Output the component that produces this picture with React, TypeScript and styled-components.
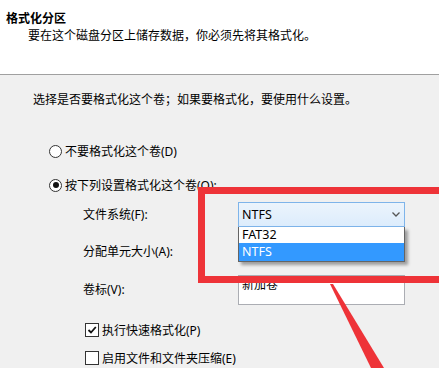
import React from 'react';
import styled, { createGlobalStyle } from 'styled-components';

// 全局样式
const GlobalStyle = createGlobalStyle`
  html, body {
    margin: 0;
    padding: 0;
    background: #f0f0f0;
  }
  body {
    font-family: "Noto Sans", "Noto Sans CJK SC", sans-serif;
    font-size: 12px;
    color: #000;
  }
`;

const Page = styled.div`
  position: relative;
  width: 439px;
  height: 368px;
  overflow: hidden;
  background: #f0f0f0;
`;

// 顶部白色标题区
const Header = styled.div`
  height: 75px;
  box-sizing: border-box;
  padding: 10px 0 0 6px;
  background: #fff;
  border-bottom: 1px solid #a0a0a0;
`;

const Title = styled.div`
  font-weight: bold;
  line-height: 17px;
`;

const Subtitle = styled.div`
  margin-left: 22px;
  line-height: 17px;
`;

const Body = styled.div`
  padding: 17px 0 0 33px;
`;

const Instruction = styled.div`
  line-height: 16px;
`;

const RadioGroup = styled.div`
  margin: 33px 0 0 16px;
  display: flex;
  flex-direction: column;
  gap: 14px;
`;

const OptionRow = styled.label`
  display: flex;
  align-items: center;
  height: 20px;
  gap: 3px;
`;

const RadioDot = styled.span<{ $checked?: boolean }>`
  width: 11px;
  height: 11px;
  border: 1px solid #333;
  border-radius: 50%;
  background: #fff;
  display: flex;
  align-items: center;
  justify-content: center;
  &::after {
    content: '';
    width: 6px;
    height: 6px;
    border-radius: 50%;
    background: ${(p) => (p.$checked ? '#111' : 'transparent')};
  }
`;

const FormGrid = styled.div`
  margin: 7px 0 0 50px;
  display: grid;
  grid-template-columns: 155px 167px;
  grid-template-rows: 25px 20px 30px;
  row-gap: 15px;
  align-items: center;
  & > :nth-child(n + 5) {
    margin-top: -5px;
  }
`;

const FieldLabel = styled.div`
  line-height: 16px;
`;

const SelectWrap = styled.div`
  position: relative;
  height: 25px;
`;

const SelectBox = styled.div`
  height: 25px;
  box-sizing: border-box;
  border: 1px solid #7eb4ea;
  background: linear-gradient(#ecf4fc, #dcecfc);
  display: flex;
  align-items: center;
  justify-content: space-between;
  padding: 0 4px 0 3px;
  font-size: 12.5px;
`;

const DropList = styled.div`
  position: absolute;
  top: 25px;
  left: 0;
  right: 0;
  border: 1px solid #646464;
  border-top: none;
  background: #fff;
  box-shadow: 3px 3px 3px rgba(0, 0, 0, 0.35);
  z-index: 2;
`;

const DropItem = styled.div<{ $active?: boolean }>`
  height: ${(p) => (p.$active ? 18 : 16)}px;
  line-height: ${(p) => (p.$active ? 18 : 16)}px;
  padding-left: 3px;
  font-size: 12.5px;
  background: ${(p) => (p.$active ? '#3399ff' : '#fff')};
  color: ${(p) => (p.$active ? '#fff' : '#000')};
`;

const TextBox = styled.div`
  height: 30px;
  box-sizing: border-box;
  border: 1px solid #abadb3;
  background: #fff;
  padding: 1px 0 0 3px;
  line-height: 16px;
`;

const CheckGroup = styled.div`
  margin: 13px 0 0 52px;
  display: flex;
  flex-direction: column;
  gap: 8px;
`;

const CheckBox = styled.span`
  width: 12px;
  height: 12px;
  border: 1px solid #333;
  background: #fff;
  display: flex;
  align-items: center;
  justify-content: center;
`;

// 红色标注框和箭头
const RedFrame = styled.div`
  position: absolute;
  left: 198px;
  top: 187px;
  width: 280px;
  height: 96px;
  box-sizing: border-box;
  border: 7px solid #ee3338;
  z-index: 3;
`;

const Arrow = styled.svg`
  position: absolute;
  left: 0;
  top: 0;
  z-index: 3;
`;

const App = () => {
  return (
    <Page>
      <GlobalStyle />
      <Header>
        <Title>格式化分区</Title>
        <Subtitle>要在这个磁盘分区上储存数据，你必须先将其格式化。</Subtitle>
      </Header>
      <Body>
        <Instruction>选择是否要格式化这个卷；如果要格式化，要使用什么设置。</Instruction>
        <RadioGroup>
          <OptionRow>
            <RadioDot />
            不要格式化这个卷(D)
          </OptionRow>
          <OptionRow>
            <RadioDot $checked />
            按下列设置格式化这个卷(O):
          </OptionRow>
        </RadioGroup>
        <FormGrid>
          <FieldLabel>文件系统(F):</FieldLabel>
          <SelectWrap>
            <SelectBox>
              <span>NTFS</span>
              <svg width="8" height="5" viewBox="0 0 8 5">
                <path d="M0.5 0.5 L4 4 L7.5 0.5" fill="none" stroke="#555" strokeWidth="1.3" />
              </svg>
            </SelectBox>
            <DropList>
              <DropItem>FAT32</DropItem>
              <DropItem $active>NTFS</DropItem>
            </DropList>
          </SelectWrap>
          <FieldLabel>分配单元大小(A):</FieldLabel>
          <div />
          <FieldLabel>卷标(V):</FieldLabel>
          <TextBox>新加卷</TextBox>
        </FormGrid>
        <CheckGroup>
          <OptionRow>
            <CheckBox>
              <svg width="10" height="10" viewBox="0 0 10 10">
                <path d="M1.5 5 L4 7.5 L8.8 2" fill="none" stroke="#111" strokeWidth="1.8" />
              </svg>
            </CheckBox>
            执行快速格式化(P)
          </OptionRow>
          <OptionRow>
            <CheckBox />
            启用文件和文件夹压缩(E)
          </OptionRow>
        </CheckGroup>
      </Body>
      <RedFrame />
      <Arrow width="439" height="368" viewBox="0 0 439 368">
        <polygon points="330,284 333,284 384,368 371,368" fill="#ee3338" />
      </Arrow>
    </Page>
  );
};

export default App;
